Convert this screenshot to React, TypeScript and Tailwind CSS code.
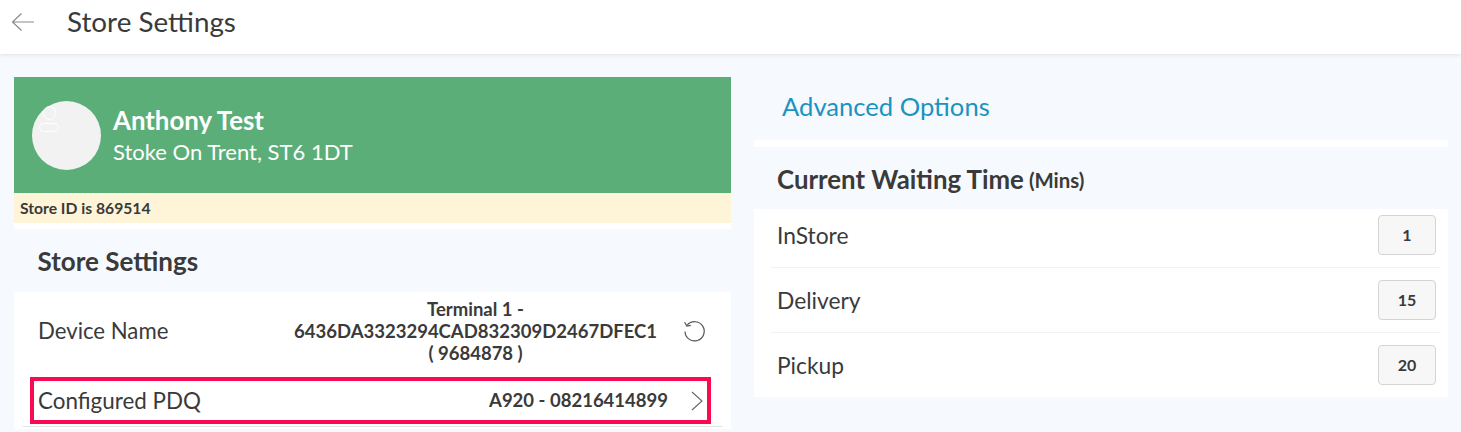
const waitingTimes = [
  { label: "InStore", value: "1" },
  { label: "Delivery", value: "15" },
  { label: "Pickup", value: "20" },
];

function BackArrow() {
  return (
    <svg width="24" height="20" viewBox="0 0 24 20" fill="none" stroke="#8a8a8a" strokeWidth="1.2" aria-hidden="true">
      <path d="M23 10H1.5M10.5 1.5 1.5 10l9 8.5" />
    </svg>
  );
}

function ResetIcon() {
  return (
    <svg width="24" height="24" viewBox="0 0 24 24" fill="none" stroke="#555" strokeWidth="1.2" aria-hidden="true">
      <path d="M5.2 6.2A9.6 9.6 0 1 1 3 12.5" />
      <path d="M2.6 3.2 4.8 7l4-.6" />
    </svg>
  );
}

function Chevron() {
  return (
    <svg width="12" height="20" viewBox="0 0 12 20" fill="none" stroke="#666" strokeWidth="1.1" aria-hidden="true">
      <path d="M1 1l10 9-10 9" />
    </svg>
  );
}

export default function App() {
  return (
    <div className="h-[432px] w-[1461px] overflow-hidden bg-[#f6f9fd] font-['Lato','Liberation_Sans',sans-serif] text-[#3a3a3a]">
      <header className="flex h-[54px] items-center bg-white pb-[10px] pl-[11px] shadow-[0_1px_4px_rgba(0,0,0,0.1)]">
        <BackArrow />
        <h1 className="ml-[32px] text-[27.8px] leading-none">Store Settings</h1>
      </header>

      <div className="flex items-start pt-[23px] pl-[14px]">
        <section className="w-[717px]">
          <div className="flex h-[116px] items-center bg-[#5cae78] pl-[18px] text-white">
            <div className="relative h-[69px] w-[69px] rounded-full bg-[#f2f2f2]">
              <span className="absolute top-[5px] left-[11px] h-[14px] w-[13px] rounded-full border-[1.5px] border-white" />
              <span className="absolute top-[22px] left-[7px] h-[9px] w-[20px] rounded-full border-[1.5px] border-white" />
            </div>
            <div className="mt-[1px] ml-[12px]">
              <p className="text-[25.8px] leading-[32px] font-bold">Anthony Test</p>
              <p className="text-[22px] leading-[32px]">Stoke On Trent, ST6 1DT</p>
            </div>
          </div>
          <div className="flex h-[30px] items-center bg-[#fef4d7] pt-[1px] pl-[6px] text-[15.7px] font-bold">Store ID is 869514</div>
          <div className="h-[6px] bg-white" />

          <h2 className="flex h-[63px] items-center pt-[1px] pl-[23.5px] text-[26px] font-bold">Store Settings</h2>

          <div className="bg-white pb-[2px]">
            <div className="flex h-[78px] items-center pr-[25px] pl-[24px]">
              <span className="text-[22.2px]">Device Name</span>
              <div className="ml-auto text-center text-[18.5px] leading-[22px] font-bold">
                <p>Terminal 1 -</p>
                <p>6436DA3323294CAD832309D2467DFEC1</p>
                <p>( 9684878 )</p>
              </div>
              <span className="ml-[25px]"><ResetIcon /></span>
            </div>
            <div className="mt-[7px] mr-[20px] ml-[16px] flex h-[47px] items-center border-4 border-[#fa0a50] pr-[4px] pl-[4px]">
              <span className="text-[22.4px]">Configured PDQ</span>
              <span className="ml-auto text-[18.5px] font-bold">A920 - 08216414899</span>
              <span className="ml-[23px] flex"><Chevron /></span>
            </div>
            <div className="mx-[8px] mt-[2px] h-px bg-[#e8e8e8]" />
          </div>
        </section>

        <section className="ml-[23px] w-[694px]">
          <div className="flex h-[63px] items-center pb-[4px] pl-[28px] text-[25.6px] text-[#1a93c2]">Advanced Options</div>
          <div className="h-[7px] bg-white" />
          <h2 className="flex h-[62px] items-center pt-[2px] pl-[23px] text-[25.8px] font-bold">
            Current Waiting Time
            <span className="mt-[2px] ml-[5px] text-[20.4px] font-bold">(Mins)</span>
          </h2>
          <div className="bg-white pr-[8px] pl-[17px]">
            {waitingTimes.map((item, index) => (
              <div
                key={item.label}
                className={`flex items-center pr-[4px] pb-[12px] pl-[6px] ${index === 0 ? "pt-[6px]" : "pt-[12px]"} ${index < waitingTimes.length - 1 ? "border-b border-[#f2f2f2]" : ""}`}
              >
                <span className="text-[22.8px]">{item.label}</span>
                <span className="ml-auto flex h-[40px] w-[58px] items-center justify-center rounded-[4px] border border-[#d4d4d4] bg-[#f7f7f7] text-[16px] font-bold">
                  {item.value}
                </span>
              </div>
            ))}
          </div>
        </section>
      </div>
    </div>
  );
}
